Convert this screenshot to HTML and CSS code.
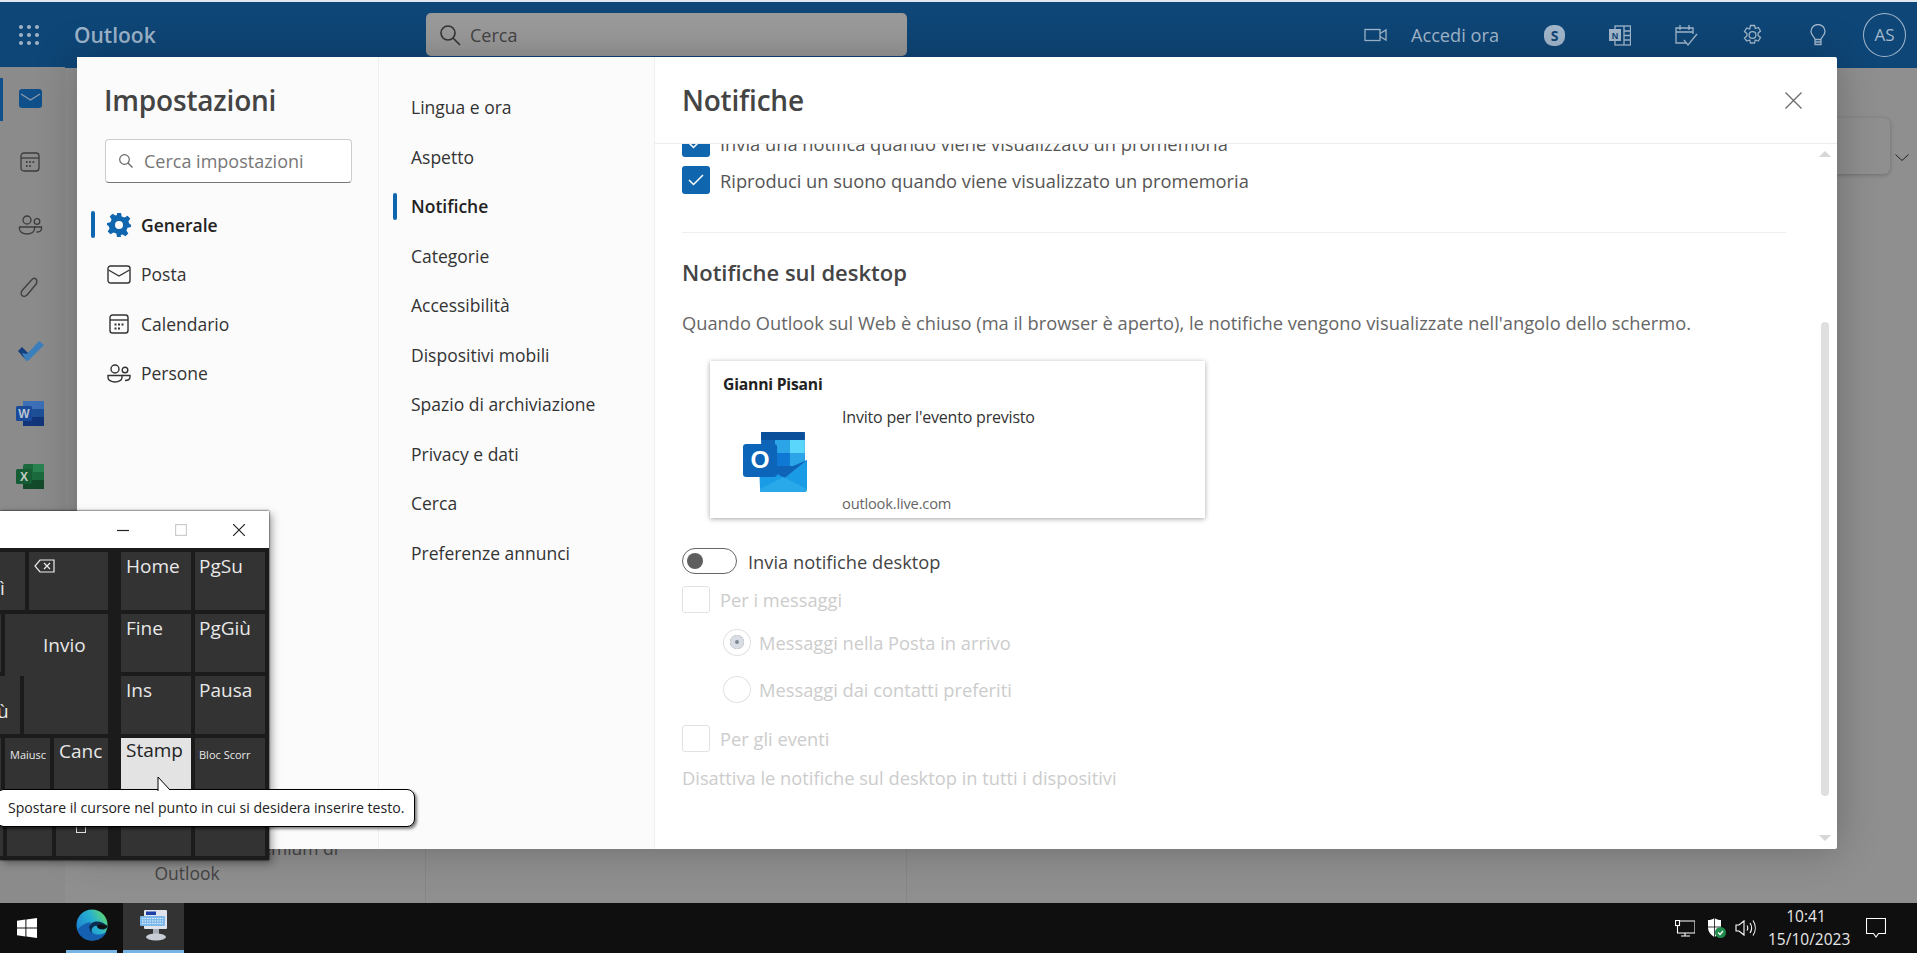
FILE: index.html
```html
<!DOCTYPE html>
<html lang="it">
<head>
    <meta charset="utf-8">
    <title>Outlook - Impostazioni</title>
    <link rel="stylesheet" href="styles.css">
</head>
<body>
    <div class="topline"></div>

    <!-- top bar -->
    <header class="topbar">
        <svg class="waffle" width="22" height="22" viewBox="0 0 22 22" fill="#9db4ca"><circle cx="3" cy="3" r="2"/><circle cx="11" cy="3" r="2"/><circle cx="19" cy="3" r="2"/><circle cx="3" cy="11" r="2"/><circle cx="11" cy="11" r="2"/><circle cx="19" cy="11" r="2"/><circle cx="3" cy="19" r="2"/><circle cx="11" cy="19" r="2"/><circle cx="19" cy="19" r="2"/></svg>
        <div class="brand">Outlook</div>
        <div class="searchbar">
            <svg width="22" height="22" viewBox="0 0 22 22" fill="none" stroke="#333" stroke-width="1.6"><circle cx="9" cy="9" r="7"/><path d="M14 14l7 7"/></svg>
            <span>Cerca</span>
        </div>
        <div class="top-actions">
            <svg class="ti-video" width="23" height="14" viewBox="0 0 23 14" fill="none" stroke="#a3b8cc" stroke-width="1.3"><rect x="1" y="1.5" width="15" height="11"/><path d="M16 5.500L22 2v10l-6-3.500"/></svg>
            <span class="join">Accedi ora</span>
            <span class="skype">S</span>
            <svg class="ti-note" width="22" height="21" viewBox="0 0 22 21"><rect x="6" y="1" width="15.500" height="19" fill="none" stroke="#a3b8cc" stroke-width="1.3"/><path d="M15 1v19M15 6h6M15 10.500h6M15 15h6" stroke="#a3b8cc" stroke-width="1.3"/><rect x="0" y="4" width="12" height="12" fill="#a3b8cc"/><text x="6" y="13.500" font-size="9" font-weight="700" text-anchor="middle" fill="#0e4677" font-family="Liberation Sans">N</text></svg>
            <svg class="ti-todo" width="23" height="23" viewBox="0 0 23 23" fill="none" stroke="#a3b8cc" stroke-width="1.3"><path d="M11 19H1V4h17v6M1 8h17M5 1v5M14 1v5"/><path d="M9 16l4 5 9-11"/></svg>
            <svg class="ti-gear" width="23" height="22" viewBox="0 0 23 22" fill="none" stroke="#a3b8cc" stroke-width="1.3"><path d="M9.500 1.500h4l.8 3 3-1 2.200 3.500-2.400 2v2.500l2.400 2-2.200 3.500-3-1-.8 3h-4l-.8-3-3 1L3.500 14l2.400-2V9.500L3.500 7.500l2.200-3.500 3 1z"/><circle cx="11.500" cy="11" r="3.400"/></svg>
            <svg class="ti-bulb" width="16" height="22" viewBox="0 0 16 22" fill="none" stroke="#a3b8cc" stroke-width="1.3"><path d="M5 15.500C4.500 12.500 1 11 1 7.500a7 7 0 0114 0c0 3.500-3.500 5-4 8zM5 15.500v5h6v-5M5.500 18h5"/></svg>
            <span class="avatar">AS</span>
        </div>
    </header>

    <!-- app behind the dialog -->
    <div class="app">
        <nav class="rail">
            <div class="rail-item active">
                <svg width="23" height="19" viewBox="0 0 23 19"><rect width="23" height="19" rx="3" fill="#10508a"/><path d="M2 5l9.500 6L21 5" fill="none" stroke="#8a9bab" stroke-width="1.300"/></svg>
            </div>
            <div class="rail-item">
                <svg width="20" height="20" viewBox="0 0 20 20" fill="none" stroke="#3d3d3d" stroke-width="1.300"><rect x="1" y="1" width="18" height="18" rx="3"/><path d="M1 6h18"/><path d="M6 10h1.500M9.300 10h1.500M12.600 10h1.500M6 14h1.500M9.300 14h1.500" stroke-width="2"/></svg>
            </div>
            <div class="rail-item">
                <svg width="25" height="20" viewBox="0 0 25 20" fill="none" stroke="#3d3d3d" stroke-width="1.300"><circle cx="9" cy="5" r="4"/><path d="M1.500 12h15v2c0 3-3.500 5-7.500 5s-7.500-2-7.500-5z"/><circle cx="19" cy="6.500" r="2.800"/><path d="M16 12h7.500v1.500c0 2-2 3.500-5 3.500"/></svg>
            </div>
            <div class="rail-item">
                <svg width="20" height="22" viewBox="0 0 20 22" fill="none" stroke="#3d3d3d" stroke-width="1.300"><path d="M17 6L7.500 17.500c-1.500 2-4 2.500-5.500 1s-1-3.500.5-5.500L12 2.500c1-1.200 2.700-1.500 4-.5 1 1 1 2.800 0 4"/></svg>
            </div>
            <div class="rail-item">
                <svg width="27" height="22" viewBox="0 0 27 22"><path d="M1 11l4-4 6 6-3 6z" fill="#133f7d"/><path d="M8 19l-3-6 5 1L22 1l5 4-15 15c-2 2-3 1-4-1z" fill="#3c7fbd"/></svg>
            </div>
            <div class="rail-item">
                <svg width="28" height="25" viewBox="0 0 28 25"><rect x="7" y="0" width="21" height="25" rx="2" fill="#1c4f96"/><rect x="7" y="0" width="21" height="8" fill="#3c6fb5"/><rect x="7" y="16" width="21" height="9" fill="#12357a"/><rect x="0" y="5" width="16" height="15" rx="1.500" fill="#1a4a9a"/><text x="8" y="17" font-size="12" font-weight="700" text-anchor="middle" fill="#b9c4d2" font-family="Liberation Sans">W</text></svg>
            </div>
            <div class="rail-item">
                <svg width="28" height="25" viewBox="0 0 28 25"><rect x="7" y="0" width="21" height="25" rx="2" fill="#1b6a3d"/><rect x="17" y="0" width="11" height="8" fill="#2a8251"/><rect x="7" y="16" width="21" height="9" fill="#124a2a"/><rect x="0" y="5" width="16" height="15" rx="1.500" fill="#155c35"/><text x="8" y="17" font-size="12" font-weight="700" text-anchor="middle" fill="#c0cdc5" font-family="Liberation Sans">X</text></svg>
            </div>
        </nav>
        <section class="promo">
            <p>in 365 con le funzionalità premium di Outlook</p>
        </section>
        <section class="list"></section>
        <section class="reading">
            <div class="reading-card"></div>
            <svg class="reading-chevron" width="14" height="8" viewBox="0 0 14 8" fill="none" stroke="#222"><path d="M.5.5L7 6.500 13.500.5"/></svg>
        </section>
    </div>

    <!-- taskbar -->
    <footer class="taskbar">
        <div class="task-start">
            <svg width="20" height="20" viewBox="0 0 20 20" fill="#fff"><path d="M0 2.800l8.400-1.200v8H0zM9.400 1.400L20 0v9.600H9.400zM0 10.600h8.400v7.900L0 17.300zM9.400 10.600H20V20L9.400 18.600z"/></svg>
        </div>
        <div class="task-btn running">
            <svg width="32" height="32" viewBox="0 0 32 32">
                <defs>
                    <linearGradient id="edgeA" x1="0" y1="0.700" x2="1" y2="0.100"><stop offset="0" stop-color="#1b7fd2"/><stop offset="0.550" stop-color="#27b0cf"/><stop offset="1" stop-color="#6bdc62"/></linearGradient>
                </defs>
                <circle cx="16" cy="16" r="15.500" fill="url(#edgeA)"/>
                <path d="M1.500 21C4 29 11 31.500 16.500 31.500 23 31.500 28 28 30.500 23 26 26 20 26.500 17 24 13 21 13 16 15 13 9 14 4 17 1.500 21z" fill="#1560b0"/>
                <path d="M13 19c0-4 4-6.500 8-6.500 4 0 7.500 2 10.500 4.500 0 2-2.500 3.500-5 3.500-3 0-4.500-1-5-2.500-.4-1.200-1.500-1.500-3-.8-2.500 1-3.500 4-2.500 7-1.500-1-2.500-3-2.500-5.200z" fill="#0c2d52"/>
                <path d="M21 17.500c.5 1.500 2 2.500 5 2.500 2.500 0 4.500-1 5.500-3-2-.5-3-1-5-1.500-2-.3-4.500 0-5.500 2z" fill="#0f0f0f"/>
            </svg>
        </div>
        <div class="task-btn running current">
            <svg width="30" height="32" viewBox="0 0 30 32">
                <rect x="5" y="1" width="23" height="19" rx="1" fill="#dfe4ec"/>
                <rect x="7" y="2.500" width="10" height="3.500" fill="#1f3fa8"/>
                <rect x="1" y="7" width="25" height="10" rx="1" fill="#7cb8ea"/>
                <path d="M3 9.500h21M3 12h21M3 14.500h21" stroke="#e2f1fc" stroke-width="1.200" stroke-dasharray="1.500 1"/>
                <rect x="14" y="20" width="6" height="6" fill="#a9aeb6"/>
                <ellipse cx="17" cy="28" rx="10" ry="3.500" fill="#c9ced6"/>
            </svg>
        </div>
        <div class="tray">
            <svg class="tray-net" width="20" height="17" viewBox="0 0 20 17" fill="none" stroke="#fff" stroke-width="1.100"><path d="M5 1h15v12H2.500V6"/><path d="M10 13v3M6 16h9"/><rect x=".5" y=".5" width="4" height="5" fill="#0f0f0f"/></svg>
            <svg class="tray-shield" width="20" height="20" viewBox="0 0 20 20"><path d="M8.500 0c2 1.500 4 2 6.500 2v7c0 5-3 8-6.500 10C5 17 2 14 2 9V2c2.500 0 4.500-.5 6.500-2z" fill="#fff"/><path d="M8.500 0v19M2 9h13" stroke="#0f0f0f" stroke-width=".8"/><circle cx="14.500" cy="14.500" r="5.500" fill="#1f8a4c"/><path d="M12 14.500l2 2 3-3.500" fill="none" stroke="#fff" stroke-width="1.200"/></svg>
            <svg class="tray-sound" width="21" height="18" viewBox="0 0 21 18" fill="none" stroke="#fff" stroke-width="1.100"><path d="M1 6h3l5-4v14l-5-4H1z"/><path d="M12 6.500c1 1.500 1 3.500 0 5M15 4c2 3 2 7 0 10M18 1.500c3 4.500 3 10.500 0 15"/></svg>
            <div class="clock">
                <span>10:41</span>
                <span>15/10/2023</span>
            </div>
            <svg class="tray-note" width="20" height="20" viewBox="0 0 20 20" fill="none" stroke="#fff" stroke-width="1.100"><path d="M.5.500h19v15h-7L10 19l-2.500-3.500h-7z"/></svg>
        </div>
    </footer>

    <!-- settings dialog -->
    <div class="dialog">
        <aside class="dlg-left">
            <h1>Impostazioni</h1>
            <div class="set-search">
                <svg width="14" height="14" viewBox="0 0 14 14" fill="none" stroke="#666" stroke-width="1.200"><circle cx="5.500" cy="5.500" r="4.800"/><path d="M9 9l4.500 4.500"/></svg>
                <span>Cerca impostazioni</span>
            </div>
            <ul class="group-nav">
                <li class="selected">
                    <svg width="24" height="24" viewBox="0 0 24 24" fill="#0f65ae"><path d="M10 0h4l.7 3.400 2.800 1.200L20.500 2.700l2.800 2.800-1.900 3 1.200 2.800 3.400.7v0L24 14l-3.400.7-1.200 2.800 1.900 3-2.800 2.800-3-1.900-1.800.7L14 24h-4l-.7-3.400-2.800-1.200-3 1.900L.7 18.500l1.900-3-1.200-2.800L0 12v-2l3.400-.7 1.200-2.800-1.900-3L5.500 .7l3 1.900 1.500-.6zM12 8a4 4 0 100 8 4 4 0 000-8z" fill-rule="evenodd"/></svg>
                    <span>Generale</span>
                </li>
                <li>
                    <svg width="24" height="19" viewBox="0 0 24 19" fill="none" stroke="#333" stroke-width="1.400"><rect x="1" y="1" width="22" height="17" rx="2.500"/><path d="M1.500 5l10.500 6 10.500-6"/></svg>
                    <span>Posta</span>
                </li>
                <li>
                    <svg width="24" height="20" viewBox="0 0 24 20" fill="none" stroke="#333" stroke-width="1.400"><rect x="3" y="1" width="18" height="18" rx="2.500"/><path d="M3 6h18"/><path d="M7.500 10.500h2M11 10.500h2M14.500 10.500h2M7.500 14.500h2M11 14.500h2" stroke-width="2"/></svg>
                    <span>Calendario</span>
                </li>
                <li>
                    <svg width="24" height="19" viewBox="0 0 24 19" fill="none" stroke="#333" stroke-width="1.400"><circle cx="8" cy="5" r="4"/><path d="M1 11.500h14v2c0 2.500-3 4.500-7 4.500s-7-2-7-4.500z"/><circle cx="18" cy="6" r="2.800"/><path d="M15 11.500h8v1.500c0 2-2 3.500-5 3.500"/></svg>
                    <span>Persone</span>
                </li>
            </ul>
        </aside>

        <nav class="dlg-middle">
            <a>Lingua e ora</a>
            <a>Aspetto</a>
            <a class="selected">Notifiche</a>
            <a>Categorie</a>
            <a>Accessibilità</a>
            <a>Dispositivi mobili</a>
            <a>Spazio di archiviazione</a>
            <a>Privacy e dati</a>
            <a>Cerca</a>
            <a>Preferenze annunci</a>
        </nav>

        <main class="dlg-right">
            <div class="pane-head">
                <h2>Notifiche</h2>
                <svg width="17" height="17" viewBox="0 0 17 17" fill="none" stroke="#6b6b6b" stroke-width="1.300"><path d="M.5.5l16 16M16.500.5l-16 16"/></svg>
            </div>
            <div class="pane-body">
                <div class="scroll-content">
                    <label class="check-row">
                        <span class="check on"><svg width="16" height="12" viewBox="0 0 16 12" fill="none" stroke="#fff" stroke-width="1.500"><path d="M1 6l4.500 4.500L15 1"/></svg></span>
                        Invia una notifica quando viene visualizzato un promemoria
                    </label>
                    <label class="check-row second">
                        <span class="check on"><svg width="16" height="12" viewBox="0 0 16 12" fill="none" stroke="#fff" stroke-width="1.500"><path d="M1 6l4.500 4.500L15 1"/></svg></span>
                        Riproduci un suono quando viene visualizzato un promemoria
                    </label>
                    <hr class="rule">
                    <h3>Notifiche sul desktop</h3>
                    <p class="intro">Quando Outlook sul Web è chiuso (ma il browser è aperto), le notifiche vengono visualizzate nell'angolo dello schermo.</p>

                    <div class="toast">
                        <div class="toast-name">Gianni Pisani</div>
                        <div class="toast-row">
                            <svg class="toast-logo" width="65" height="60" viewBox="0 0 61 60" preserveAspectRatio="none">
                                <rect x="17" y="0" width="41" height="42" rx="2" fill="#0f64b8"/>
                                <rect x="17" y="0" width="41" height="8" fill="#0a4f99"/>
                                <rect x="30" y="8" width="14" height="13" fill="#2ba5e8"/>
                                <rect x="44" y="8" width="14" height="13" fill="#5ad5fb"/>
                                <rect x="30" y="21" width="14" height="13" fill="#0f78d4"/>
                                <rect x="44" y="21" width="14" height="13" fill="#2ba5e8"/>
                                <rect x="17" y="21" width="13" height="13" fill="#0a5fb0"/>
                                <path d="M30 42L60 28v29a3 3 0 01-3 3H17V42z" fill="#0f64b8"/>
                                <path d="M15 32l24 14 21-18v29a3 3 0 01-3 3H19a3 3 0 01-3-3z" fill="#1a9be6"/>
                                <path d="M16 60h41a3 3 0 003-3L38 45 16 57z" fill="#29a8ea"/>
                                <rect x="0" y="12" width="32" height="33" rx="3" fill="#0c65b8"/>
                                <text x="16" y="36" font-size="23" font-weight="700" text-anchor="middle" fill="#fff" font-family="Liberation Sans">O</text>
                            </svg>
                            <div class="toast-text">
                                <div class="toast-msg">Invito per l'evento previsto</div>
                                <div class="toast-src">outlook.live.com</div>
                            </div>
                        </div>
                    </div>

                    <div class="toggle-row">
                        <span class="toggle"><span class="thumb"></span></span>
                        Invia notifiche desktop
                    </div>
                    <div class="opt opt-msg"><span class="check off"></span>Per i messaggi</div>
                    <div class="opt opt-radio"><span class="radio picked"></span>Messaggi nella Posta in arrivo</div>
                    <div class="opt opt-radio second"><span class="radio"></span>Messaggi dai contatti preferiti</div>
                    <div class="opt opt-event"><span class="check off"></span>Per gli eventi</div>
                    <div class="opt-off">Disattiva le notifiche sul desktop in tutti i dispositivi</div>
                </div>
                <div class="scrollbar">
                    <span class="arrow up"></span>
                    <span class="scroll-thumb"></span>
                    <span class="arrow down"></span>
                </div>
            </div>
        </main>
    </div>

    <!-- on screen keyboard window, cut off by the screen edge -->
    <div class="osk">
        <div class="osk-title">
            <svg width="12" height="12" viewBox="0 0 12 12" stroke="#222" stroke-width="1.200"><path d="M0 6.500h12"/></svg>
            <svg width="12" height="12" viewBox="0 0 12 12" fill="none" stroke="#ccc" stroke-width="1.200"><rect x=".6" y=".6" width="10.800" height="10.800"/></svg>
            <svg width="12" height="12" viewBox="0 0 12 12" stroke="#222" stroke-width="1.200"><path d="M0 0l12 12M12 0L0 12"/></svg>
        </div>
        <div class="osk-keys">
            <div class="osk-left">
                <div class="osk-row">
                    <div class="key k-25 k-igrave">ì</div>
                    <div class="key k-79">
                        <svg width="21" height="14" viewBox="0 0 21 14" fill="none" stroke="#eee" stroke-width="1.200"><path d="M6 1h14v12H6L1 7z"/><path d="M10 4l6 6M16 4l-6 6"/></svg>
                    </div>
                </div>
                <div class="osk-row">
                    <div class="key k-1"></div>
                    <div class="key k-103 k-invio">Invio</div>
                </div>
                <div class="osk-row">
                    <div class="key k-20 k-ugrave">ù</div>
                    <div class="key k-84 k-invio-low"></div>
                </div>
                <div class="osk-row">
                    <div class="key k-1"></div>
                    <div class="key k-45 small">Maiusc</div>
                    <div class="key k-54">Canc</div>
                </div>
                <div class="osk-row last">
                    <div class="key k-3"></div>
                    <div class="key k-45"></div>
                    <div class="key k-52 k-mini"><span></span></div>
                </div>
            </div>
            <div class="osk-right">
                <div class="key">Home</div>
                <div class="key">PgSu</div>
                <div class="key">Fine</div>
                <div class="key">PgGiù</div>
                <div class="key">Ins</div>
                <div class="key">Pausa</div>
                <div class="key pressed">Stamp</div>
                <div class="key small k-bloc">Bloc Scorr</div>
                <div class="key"></div>
                <div class="key"></div>
            </div>
        </div>
        <div class="tip">
            <svg class="tip-arrow" width="14" height="14" viewBox="0 0 14 14"><path d="M1 14V0l12 13" fill="#fff" stroke="#000"/></svg>
            Spostare il cursore nel punto in cui si desidera inserire testo.
        </div>
    </div>
</body>
</html>
```

FILE: styles.css
```css
* { box-sizing: border-box; }
html, body { height: 100%; }
body { margin: 0; height: 953px; overflow: hidden; display: flex; flex-direction: column; position: relative; font-family: "Open Sans", "Noto Sans", sans-serif; color: #333; background: #8f8f8f; }
h1, h2, h3, p, ul { margin: 0; padding: 0; }
ul { list-style: none; }

.topline { height: 2px; background: #dfe8ee; }

/* top bar */
.topbar { height: 66px; background: #0e4677; display: flex; align-items: flex-start; color: #a3b8cc; flex: none; }
.waffle { margin: 22px 0 0 18px; }
.brand { margin: 18px 0 0 34px; width: 352px; font-size: 21px; line-height: 30px; font-weight: 600; color: #9db4ca; }
.searchbar { width: 481px; height: 43px; margin-top: 11px; background: #9a9a9a; border-radius: 5px; display: flex; align-items: center; gap: 9px; padding-left: 13px; font-size: 18px; color: #444; }
.top-actions { margin-left: auto; height: 66px; padding-right: 11px; display: flex; align-items: center; }
.top-actions svg, .top-actions span { flex: none; }
.join { margin: 0 45px 0 24px; font-size: 18.200px; white-space: nowrap; }
.skype { width: 21px; height: 21px; background: #a3b8cc; border-radius: 9px; color: #0e4677; text-align: center; font-size: 14px; font-weight: 700; line-height: 21px; margin-right: 44px; }
.ti-note { margin-right: 44px; }
.ti-todo { margin-right: 43px; }
.ti-gear { margin-right: 46px; }
.ti-bulb { margin-right: 37px; }
.avatar { width: 43px; height: 44px; border: 1px solid #a3b8cc; border-radius: 50%; text-align: center; line-height: 42px; font-size: 17px; }

/* background app, dimmed */
.app { flex: 1; display: flex; min-height: 0; background: #8f8f8f; }
.rail { width: 65px; background: #8b8b8b; flex: none; margin-top: -1px; }
.rail-item { height: 63px; display: flex; align-items: center; justify-content: center; padding-right: 5px; position: relative; }
.rail-item.active::before { content: ""; position: absolute; left: 0; top: 11px; bottom: 9px; width: 3px; background: #10508a; }
.promo { width: 361px; flex: none; display: flex; align-items: flex-end; border-right: 1px solid #868686; }
.promo p { width: 320px; margin-left: -38px; flex: none; text-align: center; font-size: 17.500px; line-height: 25px; color: #444; padding-bottom: 17px; }
.list { width: 481px; flex: none; border-right: 1px solid #868686; }
.reading { flex: 1; display: flex; justify-content: flex-end; align-items: flex-start; padding-top: 50px; min-width: 0; }
.reading-card { width: 400px; height: 56px; background: #8f8f8f; border-radius: 6px; box-shadow: 0 1px 4px rgba(0,0,0,.25); }
.reading-chevron { margin: 36px 8px 0 5px; flex: none; }

/* taskbar */
.taskbar { height: 50px; background: #0f0f0f; display: flex; color: #fff; flex: none; }
.task-start { width: 66px; display: flex; align-items: center; padding-left: 17px; }
.task-btn { width: 51px; display: flex; align-items: center; justify-content: center; padding-bottom: 3px; }
.task-btn.running { border-bottom: 3px solid #76b5e3; }
.task-btn.current { width: 61px; margin-left: 6px; background: #333; }
.tray { margin-left: auto; display: flex; align-items: center; padding-right: 31px; }
.tray-net { margin-right: 11px; }
.tray-shield { margin-right: 9px; }
.tray-sound { margin-right: 12px; }
.clock { width: 76px; text-align: center; font-size: 15.500px; line-height: 23px; display: flex; flex-direction: column; color: #e8e8e8; margin-right: 22px; }

/* dialog */
.dialog { position: absolute; left: 77px; top: 57px; width: 1760px; height: 792px; background: #fff; display: grid; grid-template-columns: 302px 276px 1fr; box-shadow: 0 0 40px rgba(0,0,0,.25); border-radius: 2px; }
.dlg-left { background: #fbfbfb; border-right: 1px solid #efefef; padding: 24px 0 0 28px; }
.dlg-left h1 { font-size: 28px; line-height: 38px; font-weight: 600; color: #444; letter-spacing: -.2px; margin-left: -1px; }
.set-search { width: 247px; height: 44px; margin-top: 20px; background: #fff; border: 1px solid #ccc; border-bottom-color: #777; border-radius: 4px; display: flex; align-items: center; gap: 11px; padding-left: 13px; font-size: 18px; color: #777; }
.group-nav { margin-top: 17px; }
.group-nav li { height: 49.500px; display: flex; align-items: center; gap: 10px; padding-left: 2px; font-size: 17.500px; color: #333; position: relative; }
.group-nav li.selected { font-weight: 600; color: #222; }
.group-nav li.selected::before { content: ""; position: absolute; left: -14px; top: 11px; width: 4px; height: 27px; border-radius: 2px; background: #0f65ae; }

.dlg-middle { background: #fbfbfb; border-right: 1px solid #efefef; padding-top: 26px; display: flex; flex-direction: column; }
.dlg-middle a { height: 49.500px; line-height: 49.500px; padding-left: 32px; font-size: 17.500px; color: #333; position: relative; }
.dlg-middle a.selected { font-weight: 600; color: #222; }
.dlg-middle a.selected::before { content: ""; position: absolute; left: 14px; top: 11px; width: 4px; height: 27px; border-radius: 2px; background: #0f65ae; }

.dlg-right { display: flex; flex-direction: column; min-width: 0; }
.pane-head { height: 87px; flex: none; border-bottom: 1px solid #ececec; display: flex; align-items: center; justify-content: space-between; padding: 0 35px 0 27px; }
.pane-head h2 { font-size: 28px; font-weight: 600; color: #444; letter-spacing: -.2px; }
.pane-body { flex: 1; position: relative; overflow: hidden; padding-left: 27px; }
.scroll-content { margin-top: -15px; color: #555; font-size: 18.300px; }

.check-row { height: 28px; display: flex; align-items: center; gap: 10px; white-space: nowrap; color: #555; }
.check-row.second { margin-top: 9px; }
.check { width: 28px; height: 28px; border-radius: 3px; flex: none; display: flex; align-items: center; justify-content: center; }
.check.on { background: #0f65ae; }
.check.off { height: 27px; border: 1px solid #e2e2e2; background: #fff; }

.rule { width: 1104px; margin: 38px 0 0; border: 0; border-top: 1px solid #efefef; }
.scroll-content h3 { margin-top: 24px; height: 30px; line-height: 30px; font-size: 22px; font-weight: 600; color: #444; }
.intro { margin-top: 24px; line-height: 24px; color: #666; white-space: nowrap; }

.toast { width: 495px; height: 157px; margin: 26px 0 0 28px; background: #fff; box-shadow: 0 1px 5px rgba(0,0,0,.35); padding: 12px 0 5px 13px; display: flex; flex-direction: column; }
.toast-name { height: 22px; line-height: 22px; font-size: 15.700px; font-weight: 700; color: #222; letter-spacing: -.2px; }
.toast-row { flex: 1; display: flex; }
.toast-logo { margin: 37px 34px 0 20px; flex: none; }
.toast-text { display: flex; flex-direction: column; justify-content: space-between; padding-top: 11px; }
.toast-msg { height: 22px; line-height: 22px; font-size: 16px; color: #333; letter-spacing: -.2px; }
.toast-src { height: 20px; line-height: 20px; font-size: 14.700px; color: #666; letter-spacing: -.2px; }

.toggle-row { margin-top: 30px; height: 26px; display: flex; align-items: center; gap: 11px; color: #444; }
.toggle { width: 55px; height: 26px; border: 1px solid #666; border-radius: 13px; padding: 4px 0 0 4px; }
.thumb { display: block; width: 16px; height: 16px; border-radius: 50%; background: #5e5e5e; }
.opt { height: 26px; display: flex; align-items: center; color: #ccc; }
.opt-msg { margin-top: 12px; gap: 10px; }
.opt-radio { margin: 17px 0 0 41px; gap: 8px; }
.opt-radio.second { margin-top: 21px; }
.opt-event { margin-top: 23px; gap: 10px; }
.radio { width: 28px; height: 27px; border: 1px solid #e2e2e2; border-radius: 50%; flex: none; display: flex; align-items: center; justify-content: center; }
.radio.picked::after { content: ""; width: 14px; height: 14px; border-radius: 50%; background: #d9dde3; box-shadow: inset 0 0 0 5px #d9dde3, inset 0 0 0 7px #7f8894; }
.opt-off { margin-top: 15px; line-height: 24px; color: #ccc; }

.scrollbar { position: absolute; top: 0; right: 8px; bottom: 0; width: 8px; }
.scroll-thumb { position: absolute; left: 0; top: 178px; width: 8px; height: 474px; border-radius: 4px; background: #dfdfdf; }
.arrow { position: absolute; left: -2px; width: 0; height: 0; border-left: 6px solid transparent; border-right: 6px solid transparent; }
.arrow.up { top: 7px; border-bottom: 6px solid #d6d6d6; }
.arrow.down { bottom: 8px; border-top: 6px solid #d6d6d6; }

/* on screen keyboard */
.osk { position: absolute; left: 0; top: 511px; width: 269px; height: 349px; background: #1b1b1b; box-shadow: 0 0 2px #000, 3px 3px 8px rgba(0,0,0,.35); color: #e8e8e8; font-size: 19px; }
.osk-title { height: 37px; background: #fff; display: flex; align-items: center; justify-content: flex-end; gap: 46px; padding-right: 24px; }
.osk-keys { display: flex; padding-top: 4px; gap: 13px; }
.osk-left { width: 108px; flex: none; overflow: hidden; display: flex; flex-direction: column; gap: 4px; }
.osk-row { height: 58px; display: flex; justify-content: flex-end; gap: 4px; }
.osk-row.last { height: 56px; }
.osk-right { width: 144px; display: grid; grid-template-columns: 70px 70px; grid-template-rows: 58px 58px 58px 58px 56px; gap: 4px; }
.osk-right .key:nth-child(even) { padding-left: 4px; }
.key { background: #333; padding: 0 0 0 5px; line-height: 28px; flex: none; overflow: hidden; white-space: nowrap; }
.key.small { font-size: 11px; padding-top: 1px; line-height: 32px; }
.key.pressed { background: #e3e3e3; color: #222; line-height: 25px; }
.k-1 { width: 1px; padding: 0; }
.k-3 { width: 3px; padding: 0; }
.k-20 { width: 20px; }
.k-25 { width: 25px; }
.k-45 { width: 45px; }
.k-52 { width: 52px; }
.k-54 { width: 54px; line-height: 26px; }
.k-79 { width: 79px; padding-left: 5px; }
.k-84 { width: 84px; }
.k-103 { width: 103px; }
.k-igrave { padding: 22px 0 0 0; }
.k-ugrave { padding: 21px 0 0 0; text-indent: -3px; }
.k-invio { padding: 17px 0 0 38px; height: 62px; }
.k-invio-low { margin-top: -4px; height: 62px; }
.k-mini span { display: block; width: 10px; height: 8px; margin: 25px 0 0 15px; border: 1px solid #ddd; }

/* tooltip */
.tip { position: absolute; left: -4px; top: 278px; width: 419px; height: 38px; background: #fff; border: 1px solid #000; border-radius: 8px; box-shadow: 2px 2px 3px rgba(0,0,0,.5); color: #222; font-size: 14.100px; line-height: 36px; padding-left: 11px; white-space: nowrap; }
.tip-arrow { position: absolute; left: 160px; top: -13px; }
```
